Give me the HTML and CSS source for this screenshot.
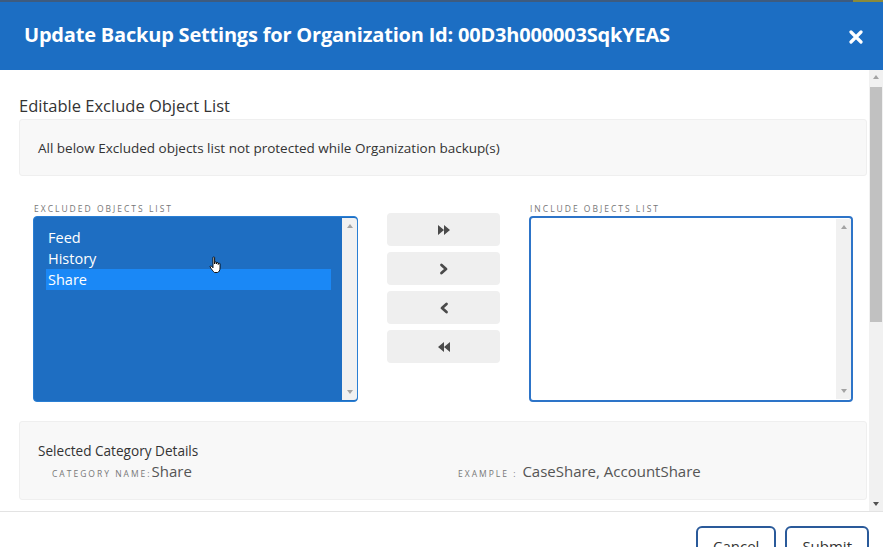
FILE: index.html
```html
<!DOCTYPE html>
<html>
<head>
<meta charset="utf-8">
<link rel="stylesheet" href="styles.css">
</head>
<body>
<div class="topstrip"><span class="ts-right"></span></div>
<header class="header">
  <h1 class="title">Update Backup Settings for Organization Id: 00D3h000003SqkYEAS</h1>
  <span class="close">
    <svg width="14" height="14" viewBox="0 0 14 14"><path d="M2 2 L12 12 M12 2 L2 12" stroke="#fff" stroke-width="3.2" stroke-linecap="round"/></svg>
  </span>
</header>
<div class="body">
  <div class="content">
    <h2 class="section-title">Editable Exclude Object List</h2>
    <div class="note">All below Excluded objects list not protected while Organization backup(s)</div>
    <div class="lists">
      <div class="col">
        <div class="label">EXCLUDED OBJECTS LIST</div>
        <div class="listbox listbox-blue">
          <ul class="items">
            <li>Feed</li>
            <li>History</li>
            <li class="selected">Share</li>
          </ul>
          <div class="sb sb-in"><span class="up"></span><span class="down"></span></div>
          <svg class="cursor" width="14" height="18" viewBox="0 0 14 18"><path d="M4 1.5 C4 0.8 5.6 0.8 5.6 1.5 L5.6 8 L5.8 6.4 C5.8 5.7 7.4 5.7 7.4 6.4 L7.4 8 L7.6 7 C7.6 6.3 9.2 6.3 9.2 7 L9.2 8.5 L9.4 7.8 C9.4 7.1 11 7.1 11 7.8 L11 12 C11 14.5 10 16 8.5 16.5 L5.5 16.5 C4.5 16 2 12.5 1.2 11 C0.8 10.2 1.8 9.5 2.5 10.2 L4 11.8 Z" fill="#fff" stroke="#000" stroke-width="0.9"/></svg>
        </div>
      </div>
      <div class="buttons">
        <button class="mv"><svg width="14" height="12" viewBox="0 0 14 12"><path d="M1 1 L7 6 L1 11 Z M7 1 L13 6 L7 11 Z" fill="#4a4a4a"/></svg></button>
        <button class="mv"><svg width="10" height="12" viewBox="0 0 10 12"><path d="M2.5 2 L7 6 L2.5 10" fill="none" stroke="#4a4a4a" stroke-width="2.8" stroke-linecap="round" stroke-linejoin="round"/></svg></button>
        <button class="mv"><svg width="10" height="12" viewBox="0 0 10 12"><path d="M7.5 2 L3 6 L7.5 10" fill="none" stroke="#4a4a4a" stroke-width="2.8" stroke-linecap="round" stroke-linejoin="round"/></svg></button>
        <button class="mv"><svg width="14" height="12" viewBox="0 0 14 12"><path d="M13 1 L7 6 L13 11 Z M7 1 L1 6 L7 11 Z" fill="#4a4a4a"/></svg></button>
      </div>
      <div class="col">
        <div class="label">INCLUDE OBJECTS LIST</div>
        <div class="listbox listbox-white">
          <ul class="items"></ul>
          <div class="sb sb-in"><span class="up"></span><span class="down"></span></div>
        </div>
      </div>
    </div>
    <div class="details">
      <div class="details-title">Selected Category Details</div>
      <div class="details-row">
        <div class="field field-name"><span class="flabel">CATEGORY NAME:</span><span class="fval">Share</span></div>
        <div class="field field-ex"><span class="flabel">EXAMPLE :</span> <span class="fval">CaseShare, AccountShare</span></div>
      </div>
    </div>
  </div>
  <div class="sb sb-page"><span class="up"></span><span class="thumb"></span><span class="down"></span></div>
</div>
<footer class="footer">
  <button class="fbtn">Cancel</button>
  <button class="fbtn">Submit</button>
</footer>
</body>
</html>
```

FILE: styles.css
```css
* { box-sizing: border-box; }
html, body { margin: 0; padding: 0; }
body {
  width: 883px;
  height: 547px;
  overflow: hidden;
  font-family: "Open Sans", "Noto Sans", sans-serif;
  background: #fff;
  color: #333;
}
.topstrip {
  height: 2px;
  background: #3e5b7e;
  display: flex;
  justify-content: flex-end;
}
.ts-right { width: 30px; background: #8a8a3a; }
.header {
  height: 68px;
  background: #1c6ec3;
  display: flex;
  align-items: center;
  justify-content: space-between;
  padding: 0 20px 0 24px;
}
.title {
  margin: 0;
  color: #fff;
  font-size: 20px;
  font-weight: 700;
  letter-spacing: -0.2px;
  padding-bottom: 3px;
}
.close { display: flex; padding-top: 1px; }
.body {
  height: 442px;
  display: flex;
  border-bottom: 1px solid #e3e3e3;
}
.content {
  width: 869px;
  padding: 0 2px 0 19px;
}
.section-title {
  margin: 25px 0 2px 0;
  font-size: 16.5px;
  font-weight: 400;
  line-height: 22px;
  color: #333;
}
.note {
  height: 57px;
  background: #f8f8f8;
  border: 1px solid #efefef;
  border-radius: 3px;
  padding: 0 0 0 18px;
  display: flex;
  align-items: center;
  font-size: 13.5px;
  color: #333;
}
.lists {
  display: flex;
  gap: 29px;
  padding: 27px 14px 0 14px;
}
.col { width: 325px; display: flex; flex-direction: column; }
.col:last-child { width: 324px; }
.label {
  font-size: 8.5px;
  letter-spacing: 2px;
  color: #777;
  line-height: 11px;
  margin-bottom: 2px;
  padding-left: 1px;
}
.listbox {
  position: relative;
  height: 186px;
  border-radius: 4px;
  display: flex;
}
.listbox-blue { background: #1e6ec2; border: 1px solid #2a7fd4; }
.listbox-white { background: #fff; border: 2px solid #2d74c8; }
.items {
  list-style: none;
  margin: 0;
  padding: 10px 11px 0 12px;
  flex: 1;
}
.items li {
  color: #fff;
  font-size: 14.5px;
  line-height: 21px;
  padding-left: 2px;
}
.items li.selected { background: #1a88f6; }
.sb {
  position: relative;
  background: #f1f1f1;
}
.sb-in { width: 15px; margin: 1px 0; }
.listbox-blue .sb-in { border-radius: 0 3px 3px 0; }
.sb .up, .sb .down {
  position: absolute;
  left: 50%;
  width: 0; height: 0;
  border-left: 3.5px solid transparent;
  border-right: 3.5px solid transparent;
  transform: translateX(-50%);
}
.sb .up { top: 6px; border-bottom: 4px solid #a3a3a3; }
.sb .down { bottom: 6px; border-top: 4px solid #a3a3a3; }
.cursor { position: absolute; left: 175px; top: 39px; }
.buttons {
  width: 113px;
  display: flex;
  flex-direction: column;
  gap: 6px;
  padding-top: 10px;
}
.mv {
  height: 33px;
  border: none;
  border-radius: 4px;
  background: #efefef;
  display: flex;
  align-items: center;
  justify-content: center;
  padding: 0;
}
.details {
  margin-top: 19px;
  height: 79px;
  background: #f8f8f8;
  border: 1px solid #efefef;
  border-radius: 3px;
  padding: 20px 0 0 18px;
}
.details-title { font-size: 13.6px; line-height: 18px; color: #333; }
.details-row { display: flex; padding-left: 14px; margin-top: 1px; align-items: baseline; }
.field { display: flex; align-items: baseline; }
.field-name { width: 406px; }
.flabel { font-size: 8.5px; letter-spacing: 2px; color: #777; }
.field-ex .flabel { margin-right: 5px; }
.fval { font-size: 15px; color: #555; }
.sb-page { width: 14px; background: #f1f1f1; }
.sb-page .up { top: 5px; }
.sb-page .down { bottom: 5px; border-top-color: #505050; }
.sb-page .thumb {
  position: absolute;
  left: 1px; right: 1px;
  top: 17px; height: 235px;
  background: #c1c1c1;
}
.footer {
  display: flex;
  justify-content: flex-end;
  gap: 9px;
  padding: 14px 14px 0 0;
}
.fbtn {
  height: 36px;
  padding: 8px 15px 0 15px;
  background: #fff;
  border: 2px solid #2a5a9a;
  border-radius: 6px;
  font-family: "Open Sans", "Noto Sans", sans-serif;
  font-size: 15px;
  color: #333;
  display: flex;
  align-items: flex-start;
}
```
